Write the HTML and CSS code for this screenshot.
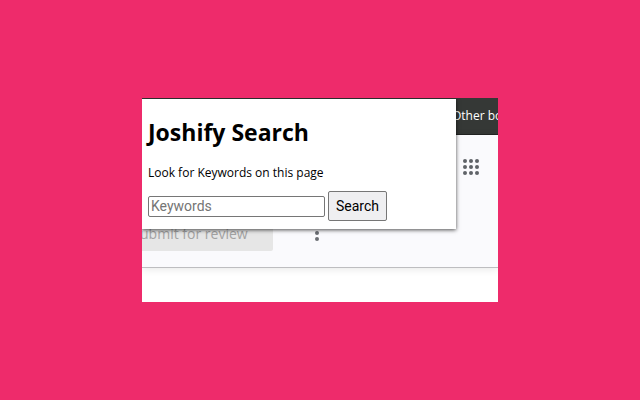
FILE: index.html
```
<!DOCTYPE html>
<html lang="en">
<head>
    <meta charset="UTF-8">
    <meta name="viewport" content="width=device-width, initial-scale=1.0">
    <title>Joshify Search</title>
    <link rel="stylesheet" href="styles.css">
</head>
<body>
    <main class="browser">
        <div class="bookmarks-bar">
            <a href="#" class="bookmarks-link">Other bookmarks</a>
        </div>

        <div class="page-header">
            <div class="header-top">
                <button type="button" class="icon-btn" aria-label="Apps">
                    <svg width="18" height="18" viewBox="0 0 18 18" fill="#5f6368">
                        <circle cx="3" cy="3" r="2"/>
                        <circle cx="9" cy="3" r="2"/>
                        <circle cx="15" cy="3" r="2"/>
                        <circle cx="3" cy="9" r="2"/>
                        <circle cx="9" cy="9" r="2"/>
                        <circle cx="15" cy="9" r="2"/>
                        <circle cx="3" cy="15" r="2"/>
                        <circle cx="9" cy="15" r="2"/>
                        <circle cx="15" cy="15" r="2"/>
                    </svg>
                </button>
            </div>
            <div class="header-actions">
                <button type="button" class="review-btn" disabled>Submit for review</button>
                <button type="button" class="icon-btn" aria-label="More options">
                    <svg width="6" height="18" viewBox="0 0 6 18" fill="#6b6e73">
                        <circle cx="3" cy="3" r="2"/>
                        <circle cx="3" cy="9" r="2"/>
                        <circle cx="3" cy="15" r="2"/>
                    </svg>
                </button>
            </div>
        </div>

        <div class="page-body"></div>

        <!-- Extension popup -->
        <form class="popup">
            <h1>Joshify Search</h1>
            <label for="keywords">Look for Keywords on this page</label>
            <div class="search-row">
                <input type="text" id="keywords" class="search-input" placeholder="Keywords">
                <button type="button" class="search-btn">Search</button>
            </div>
        </form>
    </main>
</body>
</html>
```
FILE: styles.css
```
* {
    margin: 0;
    padding: 0;
    box-sizing: border-box;
}

body {
    min-height: 100vh;
    display: flex;
    align-items: center;
    justify-content: center;
    background-color: #ee2b6b;
    font-family: "Open Sans", "Noto Sans", sans-serif;
}

.browser {
    position: relative;
    width: 100%;
    max-width: 356px;
    overflow: hidden;
    background-color: white;
}

.bookmarks-bar {
    display: flex;
    justify-content: flex-end;
    height: 37px;
    background-color: #353836;
    border-bottom: 1px solid #222423;
}

.bookmarks-link {
    width: 46px;
    color: white;
    font-size: 12px;
    line-height: 36px;
    white-space: nowrap;
    text-decoration: none;
}

.page-header {
    background-color: #fafafd;
    border-bottom: 1px solid #bdbdc0;
    box-shadow: 0 1px 8px rgba(0, 0, 0, 0.1);
}

.header-top {
    display: flex;
    justify-content: flex-end;
    padding: 23px 18px 39px;
}

.icon-btn {
    display: flex;
    border: none;
    background: none;
}

.header-actions {
    display: flex;
    align-items: center;
    gap: 41px;
    padding-bottom: 16px;
}

.review-btn {
    width: 148px;
    height: 36px;
    margin-left: -17px;
    padding-right: 18px;
    border: none;
    border-radius: 2px;
    background-color: #e6e6e6;
    color: #a3a3a3;
    font-family: "Open Sans", "Noto Sans", sans-serif;
    font-size: 14px;
    font-weight: 500;
}

.page-body {
    padding: 17px;
}

.popup {
    position: absolute;
    top: 1px;
    left: 0;
    right: 42px;
    padding: 17px 6px 8px;
    background-color: white;
    box-shadow: 0 1px 4px rgba(0, 0, 0, 0.7);
}

.popup h1 {
    margin-bottom: 15px;
    font-size: 23px;
    line-height: 32px;
}

.popup label {
    display: block;
    margin-bottom: 8px;
    font-size: 12px;
    line-height: 20px;
}

.search-row {
    display: flex;
    align-items: center;
    gap: 3px;
}

.search-input {
    width: 177px;
    height: 21px;
    padding: 1px 2px;
    border: 1px solid #767676;
    border-radius: 2px;
    font-family: Roboto, sans-serif;
    font-size: 14px;
}

.search-input::placeholder {
    color: #757575;
}

.search-btn {
    height: 30px;
    padding: 0 7px;
    border: 1px solid #767676;
    border-radius: 2px;
    background-color: #efeff1;
    color: black;
    font-family: Roboto, sans-serif;
    font-size: 14px;
}
```
